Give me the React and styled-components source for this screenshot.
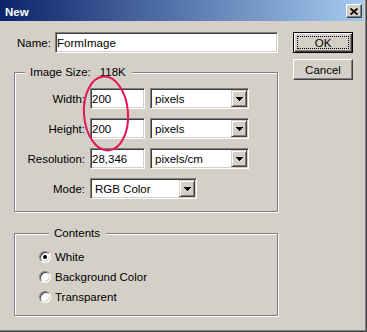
import React from 'react';
import styled, { createGlobalStyle, css } from 'styled-components';

const Global = createGlobalStyle`
  html, body { margin: 0; padding: 0; background: #D4D0C8; }
  body {
    font-family: "Liberation Sans", Arial, sans-serif;
    font-size: 11.5px;
    color: #000;
  }
`;

const Window = styled.div`
  position: relative;
  width: 367px;
  height: 332px;
  box-sizing: border-box;
  background: #D4D0C8;
  border-right: 1px solid #404040;
  border-bottom: 1px solid #404040;
  box-shadow: inset -1px -1px 0 #808080;
  display: flex;
  flex-direction: column;
  overflow: hidden;
`;

const TitleBar = styled.div`
  height: 21px;
  margin-right: 2px;
  box-sizing: border-box;
  padding: 0 2px 0 5px;
  background: linear-gradient(to right, #0A246A, #A6CAF0);
  display: flex;
  align-items: center;
  justify-content: space-between;
`;

const TitleText = styled.span`
  color: #fff;
  font-weight: bold;
  line-height: 13px;
  margin-top: 3px;
`;

const CloseButton = styled.div`
  width: 16px;
  height: 14px;
  box-sizing: border-box;
  margin-top: 1px;
  background: #D4D0C8;
  border: 1px solid;
  border-color: #fff #404040 #404040 #fff;
  box-shadow: inset -1px -1px 0 #808080;
  display: flex;
  align-items: center;
  justify-content: center;
`;

const Body = styled.div`
  display: flex;
  padding: 11px 0 0 14px;
`;

const LeftCol = styled.div`
  width: 264px;
  display: flex;
  flex-direction: column;
`;

const NameRow = styled.div`
  display: flex;
  align-items: center;
  height: 21px;
`;

const NameLabel = styled.span`
  width: 41px;
  box-sizing: border-box;
  padding-left: 3px;
`;

const Field = styled.div`
  box-sizing: border-box;
  width: ${p => p.$w}px;
  height: 21px;
  flex: none;
  background: #fff;
  border: 1px solid;
  border-color: #808080 #fff #fff #808080;
  box-shadow: inset 1px 1px 0 #404040, inset -1px -1px 0 #D4D0C8;
  padding: 1px 1px 1px ${p => p.$pad ?? 1}px;
  display: flex;
  align-items: center;
  white-space: nowrap;
  overflow: hidden;
`;

const SelectText = styled.span`
  flex: 1;
  padding-left: 3px;
`;

const DropButton = styled.div`
  width: 16px;
  height: 17px;
  box-sizing: border-box;
  flex: none;
  background: #D4D0C8;
  border: 1px solid;
  border-color: #D4D0C8 #404040 #404040 #D4D0C8;
  box-shadow: inset 1px 1px 0 #fff, inset -1px -1px 0 #808080;
  display: flex;
  align-items: center;
  justify-content: center;
`;

const Group = styled.fieldset`
  margin: ${p => p.$mt}px 0 0 0;
  padding: ${p => p.$pt}px 0 ${p => p.$pb}px ${p => p.$pl}px;
  border: 1px solid #808080;
  box-shadow: 1px 1px 0 #fff, inset 1px 1px 0 #fff;
  min-width: 0;
`;

const Legend = styled.legend`
  margin-left: 10px;
  padding: 0 6px 0 5px;
  line-height: 14px;
  background: #D4D0C8;
`;

const LegendValue = styled.span`
  margin-left: 9px;
`;

const Rows = styled.div`
  display: flex;
  flex-direction: column;
  gap: 9px;
`;

const Row = styled.div`
  display: flex;
  align-items: center;
  gap: 5px;
`;

const RowLabel = styled.span`
  width: 70px;
  text-align: right;
`;

const Radios = styled.div`
  display: flex;
  flex-direction: column;
`;

const RadioRow = styled.div`
  height: 20px;
  display: flex;
  align-items: center;
  gap: 4px;
`;

const RadioCircle = styled.span`
  width: 12px;
  height: 12px;
  box-sizing: border-box;
  border-radius: 50%;
  border: 1px solid;
  border-color: #808080 #fff #fff #808080;
  box-shadow: inset 1px 1px 0 #404040, inset -1px -1px 0 #D4D0C8;
  background: #fff;
  display: flex;
  align-items: center;
  justify-content: center;
`;

const RadioDot = styled.span`
  width: 4px;
  height: 4px;
  border-radius: 50%;
  background: #000;
`;

const ButtonCol = styled.div`
  margin-left: 15px;
  display: flex;
  flex-direction: column;
  gap: 6px;
`;

const Button = styled.div`
  width: 60px;
  height: 21px;
  box-sizing: border-box;
  padding: 3px;
  display: flex;
  align-items: center;
  justify-content: center;
  background: #D4D0C8;
  border: 1px solid;
  border-color: #fff #404040 #404040 #fff;
  box-shadow: inset -1px -1px 0 #808080;
  ${p => p.$default && css`
    border-color: #000;
    box-shadow: inset 1px 1px 0 #fff, inset -1px -1px 0 #404040, inset -2px -2px 0 #808080;
  `}
`;

const FocusRing = styled.span`
  flex: 1;
  align-self: stretch;
  border: 1px dotted #000;
  display: flex;
  align-items: center;
  justify-content: center;
`;

const Annotation = styled.svg`
  position: absolute;
  left: 81px;
  top: 74px;
  pointer-events: none;
`;

const Arrow = () => (
  <svg width="7" height="4" viewBox="0 0 7 4" shapeRendering="crispEdges">
    <polygon points="0,0 7,0 3.5,4" fill="#000" />
  </svg>
);

const Select = ({ w, children }) => (
  <Field $w={w} $pad={1}>
    <SelectText>{children}</SelectText>
    <DropButton><Arrow /></DropButton>
  </Field>
);

const Radio = ({ checked, children }) => (
  <RadioRow>
    <RadioCircle>{checked && <RadioDot />}</RadioCircle>
    <span>{children}</span>
  </RadioRow>
);

export default function App() {
  return (
    <>
      <Global />
      <Window>
        <TitleBar>
          <TitleText>New</TitleText>
          <CloseButton>
            <svg width="8" height="7" viewBox="0 0 8 7">
              <path d="M0.5 0.5 L7.5 6.5 M7.5 0.5 L0.5 6.5" stroke="#000" strokeWidth="1.7" />
            </svg>
          </CloseButton>
        </TitleBar>
        <Body>
          <LeftCol>
            <NameRow>
              <NameLabel>Name:</NameLabel>
              <Field $w={223}>FormImage</Field>
            </NameRow>
            <Group $mt={12} $pt={9} $pb={12} $pl={0}>
              <Legend>Image Size:<LegendValue>118K</LegendValue></Legend>
              <Rows>
                <Row>
                  <RowLabel>Width:</RowLabel>
                  <Field $w={55}>200</Field>
                  <Select w={99}>pixels</Select>
                </Row>
                <Row>
                  <RowLabel>Height:</RowLabel>
                  <Field $w={55}>200</Field>
                  <Select w={99}>pixels</Select>
                </Row>
                <Row>
                  <RowLabel>Resolution:</RowLabel>
                  <Field $w={55}>28,346</Field>
                  <Select w={99}>pixels/cm</Select>
                </Row>
                <Row>
                  <RowLabel>Mode:</RowLabel>
                  <Select w={107}>RGB Color</Select>
                </Row>
              </Rows>
            </Group>
            <Group $mt={14} $pt={7} $pb={8} $pl={24}>
              <Legend>Contents</Legend>
              <Radios>
                <Radio checked>White</Radio>
                <Radio>Background Color</Radio>
                <Radio>Transparent</Radio>
              </Radios>
            </Group>
          </LeftCol>
          <ButtonCol>
            <Button $default><FocusRing>OK</FocusRing></Button>
            <Button>Cancel</Button>
          </ButtonCol>
        </Body>
        <Annotation width="50" height="79" viewBox="0 0 50 79">
          <ellipse cx="25" cy="39.5" rx="22" ry="37" fill="none" stroke="#E8145A" strokeWidth="2" transform="rotate(-4 25 39.5)" />
        </Annotation>
      </Window>
    </>
  );
}
